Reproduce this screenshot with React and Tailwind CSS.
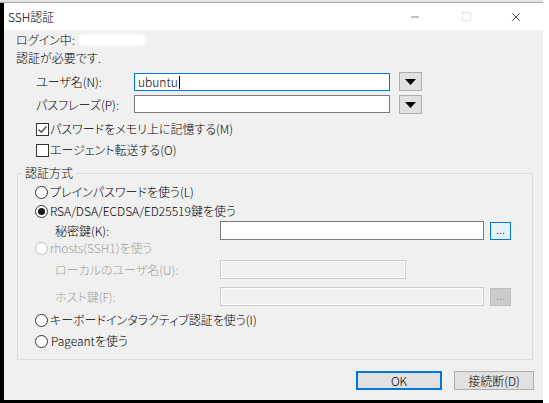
import { Minus, Square, X } from 'lucide-react';

const jp = "[font-family:'Noto_Sans_CJK_JP','Noto_Sans',sans-serif] [font-feature-settings:'palt']";

function Radio({ checked, disabled }) {
  return (
    <span
      className={`flex h-[13px] w-[13px] shrink-0 items-center justify-center rounded-full border bg-white ${
        disabled ? 'border-[#bcbcbc]' : 'border-[#333333]'
      }`}
    >
      {checked && <span className="h-[7px] w-[7px] rounded-full bg-[#1a1a1a]" />}
    </span>
  );
}

function Checkbox({ checked }) {
  return (
    <span className="flex h-[13px] w-[13px] shrink-0 items-center justify-center border border-[#333333] bg-white">
      {checked && (
        <svg width="11" height="11" viewBox="0 0 11 11">
          <path d="M1.5 5.5 L4.2 8.2 L9.5 2.5" fill="none" stroke="#555" strokeWidth="1.6" />
        </svg>
      )}
    </span>
  );
}

function DropButton() {
  return (
    <button className="flex h-[19px] w-[23px] items-center justify-center border border-[#adadad] bg-[#e1e1e1]">
      <svg width="11" height="6" viewBox="0 0 11 6">
        <path d="M0 0 H11 L5.5 6 Z" fill="#000" />
      </svg>
    </button>
  );
}

function App() {
  return (
    <div className={`relative h-[403px] w-[549px] overflow-hidden bg-white text-[12px] font-light leading-[14px] text-black ${jp}`}>
      {/* strip of whatever sits behind the dialog */}
      <div className="h-[2px] w-[543px] bg-[#e4e4e4]" />
      <div className="h-[1px] w-[543px] bg-[#a9a9a9]" />

      <div className="w-[543px] border-b-[3px] border-l-4 border-black">
        {/* Title bar */}
        <div className="flex h-[27px] items-center bg-white">
          <span className="pl-[4px] text-[12px]">SSH認証</span>
          <div className="ml-auto flex h-full pr-[4px]">
            <div className="flex w-[51px] items-center justify-center">
              <Minus className="h-[12px] w-[12px]" strokeWidth={1} />
            </div>
            <div className="flex w-[53px] items-center justify-center">
              <Square className="h-[11px] w-[11px] text-[#c4c4c4]" strokeWidth={1.2} />
            </div>
            <div className="flex w-[46px] items-center justify-center">
              <X className="h-[14px] w-[14px]" strokeWidth={1.2} />
            </div>
          </div>
        </div>

        {/* Client area */}
        <div className="flex h-[370px] flex-col bg-[#f0f0f0] pl-[12px]">
          <div className="mt-[2px] flex h-[16px] items-center">
            <span>ログイン中:</span>
            <span className="ml-[4px] h-[12px] w-[66px] rounded-[3px] bg-white blur-[1px]" />
          </div>
          <div className="mt-[2px] flex h-[16px] items-center">認証が必要です.</div>

          <div className="mt-[6px] flex h-[19px] items-end pl-[20px]">
            <span className="w-[98px] self-center">ユーザ名(N):</span>
            <div className="flex h-[18px] w-[256px] items-center border border-[#0078d7] bg-white pl-[3px]">
              <span>ubuntu</span>
              <span className="ml-[1px] h-[13px] w-[1px] bg-black" />
            </div>
            <div className="ml-[9px] self-start">
              <DropButton />
            </div>
          </div>

          <div className="mt-[4px] flex h-[19px] items-start pl-[20px]">
            <span className="w-[98px] self-center">パスフレーズ(P):</span>
            <div className="h-[18px] w-[256px] border border-[#7a7a7a] bg-white" />
            <div className="ml-[9px]">
              <DropButton />
            </div>
          </div>

          <div className="mt-[8px] flex h-[14px] items-center gap-[1px] pl-[20px]">
            <Checkbox checked />
            <span>パスワードをメモリ上に記憶する(M)</span>
          </div>
          <div className="mt-[7px] flex h-[14px] items-center gap-[1px] pl-[20px]">
            <Checkbox />
            <span>エージェント転送する(O)</span>
          </div>

          {/* 認証方式 group */}
          <div className="relative ml-[1px] mt-[16px] flex w-[516px] flex-col border border-[#dcdcdc] pb-[11px] pl-[17px]">
            <span className="absolute left-[4px] top-[-8px] bg-[#f0f0f0] px-[3px]">認証方式</span>

            <div className="mt-[11px] flex h-[14px] items-center gap-[2px]">
              <Radio />
              <span>プレインパスワードを使う(L)</span>
            </div>
            <div className="mt-[5px] flex h-[14px] items-center gap-[2px]">
              <Radio checked />
              <span>RSA/DSA/ECDSA/ED25519鍵を使う</span>
            </div>
            <div className="mt-[3px] flex h-[19px] items-center pl-[20px]">
              <span className="w-[165px]">秘密鍵(K):</span>
              <div className="h-[19px] w-[264px] border border-[#7a7a7a] bg-white" />
              <button className="ml-[6px] flex h-[18px] w-[21px] items-center justify-center border border-[#0078d7] bg-[#e5f1fb] pb-[4px] leading-none">
                ...
              </button>
            </div>
            <div className="mt-[1px] flex h-[14px] items-center gap-[2px] text-[#a0a0a0]">
              <Radio disabled />
              <span>rhosts(SSH1)を使う</span>
            </div>
            <div className="mt-[5px] flex h-[19px] items-center pl-[20px] text-[#a0a0a0]">
              <span className="w-[165px]">ローカルのユーザ名(U):</span>
              <div className="h-[19px] w-[186px] border border-[#cccccc] bg-[#f0f0f0] shadow-[inset_0_0_0_1px_#ffffff]" />
            </div>
            <div className="mt-[8px] flex h-[19px] items-center pl-[20px] text-[#a0a0a0]">
              <span className="w-[165px]">ホスト鍵(F):</span>
              <div className="h-[19px] w-[264px] border border-[#cccccc] bg-[#f0f0f0] shadow-[inset_0_0_0_1px_#ffffff]" />
              <button className="ml-[6px] flex h-[18px] w-[21px] items-center justify-center border border-[#bfbfbf] bg-[#cccccc] pb-[4px] leading-none text-[#838383]">
                ...
              </button>
            </div>
            <div className="mt-[7px] flex h-[14px] items-center gap-[2px]">
              <Radio />
              <span>キーボードインタラクティブ認証を使う(I)</span>
            </div>
            <div className="mt-[7px] flex h-[14px] items-center gap-[3px]">
              <Radio />
              <span>Pageantを使う</span>
            </div>
          </div>

          {/* Buttons */}
          <div className="ml-[1px] mt-[11px] flex w-[517px] justify-end gap-[12px]">
            <button className="h-[19px] w-[86px] border-2 border-[#0078d7] bg-[#e1e1e1]">OK</button>
            <button className="h-[19px] w-[80px] border border-[#adadad] bg-[#e1e1e1]">接続断(D)</button>
          </div>
        </div>
      </div>
    </div>
  );
}

export default App;
